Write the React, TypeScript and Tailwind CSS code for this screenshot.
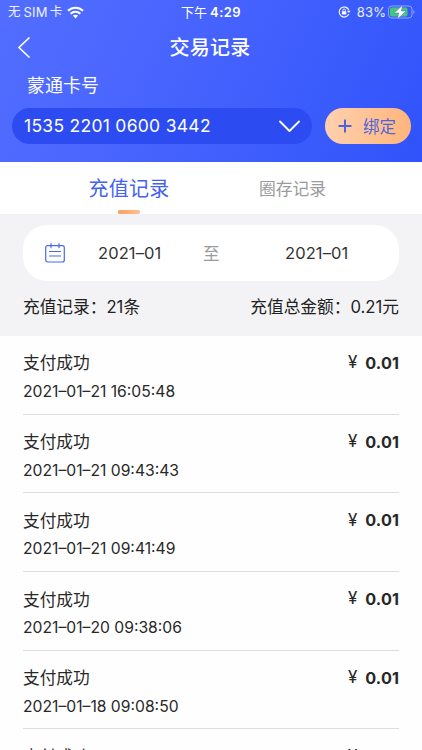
const records = [
  '2021–01–21 16:05:48',
  '2021–01–21 09:43:43',
  '2021–01–21 09:41:49',
  '2021–01–20 09:38:06',
  '2021–01–18 09:08:50',
  '2021–01–18 09:02:17',
];

function StatusBar() {
  return (
    <div className="grid h-6 grid-cols-[1fr_auto_1fr] items-center text-[13px] leading-6 text-white/90">
      <div className="flex items-center pl-2">
        <span className="text-[12.5px]">无</span>
        <span className="ml-[3px] tracking-[0.2px]">SIM</span>
        <span className="ml-[2px] text-[12.5px]">卡</span>
        <svg className="ml-[5px]" width="17" height="13" viewBox="0 0 17 13" fill="none" stroke="#fff" strokeWidth="2.2">
          <path d="M1 4.8C5.2.7 11.8.7 16 4.8" />
          <path d="M3.7 7.7c2.7-2.6 6.9-2.6 9.6 0" />
          <path d="M5.9 9.6c1.5-1.3 3.7-1.3 5.2 0L8.5 12.4z" fill="#fff" stroke="none" />
        </svg>
      </div>
      <div className="font-semibold text-white">
        <span className="font-normal">下午</span>
        <span className="ml-[3px] tracking-[0.4px]">4:29</span>
      </div>
      <div className="flex items-center justify-end pr-[7px]">
        <svg width="13" height="12" viewBox="0 0 13 12" fill="none" stroke="#fff" strokeWidth="1.1">
          <path d="M10.8 4A5 5 0 1 0 10.8 8" />
          <path d="M9 4.7h3.5L10.9 7z" fill="#fff" stroke="none" />
          <rect x="3.9" y="5.2" width="4.4" height="3.3" rx=".5" fill="#fff" stroke="none" />
          <path d="M4.8 5.5V4.3a1.3 1.3 0 0 1 2.6 0v1.2" strokeWidth=".9" />
        </svg>
        <span className="ml-[6px] tracking-[0.1px]">83%</span>
        <svg className="ml-[2px]" width="27" height="14" viewBox="0 0 27 14">
          <rect x=".5" y="1" width="23.5" height="12" rx="3.3" fill="none" stroke="#fff" strokeOpacity=".45" />
          <path d="M25.3 5v4c1.7-.6 1.7-3.4 0-4z" fill="#fff" fillOpacity=".45" />
          <rect x="2" y="2.5" width="17.5" height="9" rx="2" fill="#42c878" />
          <path d="M14.5 .3 6.2 8h4.6L9.4 14 18.2 6h-4.8z" fill="#fff" stroke="#4a65ff" strokeWidth=".5" />
        </svg>
      </div>
    </div>
  );
}

function Header() {
  return (
    <header className="h-[162px] shrink-0 bg-[linear-gradient(115deg,#526eff_0%,#4864fe_40%,#385afc_80%,#3052fa_100%)] text-white">
      <StatusBar />
      <div className="grid h-12 grid-cols-[1fr_auto_1fr] items-center">
        <svg className="ml-[17px]" width="14" height="22" viewBox="0 0 14 22" fill="none" stroke="#fff" strokeWidth="1.6">
          <path d="M12.5 .5 2 10.5l10.5 10" />
        </svg>
        <h1 className="relative -left-px text-[20px] font-medium tracking-[0.3px]">交易记录</h1>
      </div>
      <div className="h-9 pl-[27px] text-[18px] leading-[28px]">蒙通卡号</div>
      <div className="flex gap-[13px] pl-3">
        <div className="flex h-9 w-[300px] items-center justify-between rounded-full bg-[#2c4bf0] px-3">
          <span className="text-[17.5px] tracking-[0.28px]">1535 2201 0600 3442</span>
          <svg width="21" height="13" viewBox="0 0 21 13" fill="none" stroke="#fff" strokeWidth="1.8" strokeLinecap="round" strokeLinejoin="round">
            <path d="m1 1.5 9.5 9.5L20 1.5" />
          </svg>
        </div>
        <button className="flex h-9 w-[86px] items-center rounded-full bg-linear-to-r from-[#ffd0ae] to-[#ffb57b] pl-[13px] text-[#4d65dc]">
          <svg width="14" height="14" viewBox="0 0 14 14" stroke="currentColor" strokeWidth="2">
            <path d="M7 .5v13M.5 7h13" />
          </svg>
          <span className="ml-[11px] pt-[2px] text-[16.5px]">绑定</span>
        </button>
      </div>
    </header>
  );
}

function Tabs() {
  return (
    <nav className="flex h-[52px] shrink-0 bg-white pl-[88px]">
      <div className="flex w-[82px] flex-col items-center">
        <span className="h-12 text-[20px] leading-[54px] tracking-[0.3px] whitespace-nowrap text-[#4362ee]">充值记录</span>
        <i className="block h-[4px] w-[22px] rounded-[1.5px] bg-linear-to-r from-[#ff9e5c] to-[#ffbf92]" />
      </div>
      <span className="ml-[89px] text-[16.8px] leading-[54px] text-[#9b9b9b]">圈存记录</span>
    </nav>
  );
}

function Filter() {
  return (
    <section className="h-[122px] shrink-0 bg-[#f3f3f5] px-[23px] pt-[11px] text-[#333]">
      <div className="flex h-14 items-center rounded-[24px] bg-white pl-[22px] text-[16.5px]">
        <svg width="20" height="20" viewBox="0 0 20 20" fill="none" stroke="#4b68e9" strokeWidth="1.2" strokeLinecap="round">
          <rect x=".7" y="2.7" width="18.6" height="16.3" rx="2" />
          <path d="M6 .7v4M14 .7v4M4.5 8.5h11M4.5 13h11" />
        </svg>
        <span className="ml-[33px] w-[105px] tracking-[0.1px]">2021–01</span>
        <span className="w-[82px] pt-[2px] text-[16.5px] text-[#999]">至</span>
        <span className="tracking-[0.1px]">2021–01</span>
      </div>
      <div className="flex h-[54px] items-center justify-between text-[16.7px] text-[#222]">
        <span>充值记录：21条</span>
        <span>充值总金额：0.21元</span>
      </div>
    </section>
  );
}

export default function App() {
  return (
    <main className="flex h-[750px] w-full flex-col overflow-hidden bg-[#fefefe] font-['Inter','Noto_Sans_CJK_SC',sans-serif]">
      <Header />
      <Tabs />
      <Filter />
      <ul className="px-[23px] text-[#282828]">
        {records.map((time) => (
          <li key={time} className="h-[78.7px] border-b border-[#dedede] pt-[14px]">
            <div className="flex h-7 items-center justify-between text-[16.7px]">
              <span>支付成功</span>
              <span className="flex items-center pb-[2px]">
                <span className="mr-[8px] text-[17px]">¥</span>
                <b className="text-[16.2px] font-bold tracking-[0.1px]">0.01</b>
              </span>
            </div>
            <div className="h-7 text-[15.7px] leading-[27px]">{time}</div>
          </li>
        ))}
      </ul>
    </main>
  );
}
